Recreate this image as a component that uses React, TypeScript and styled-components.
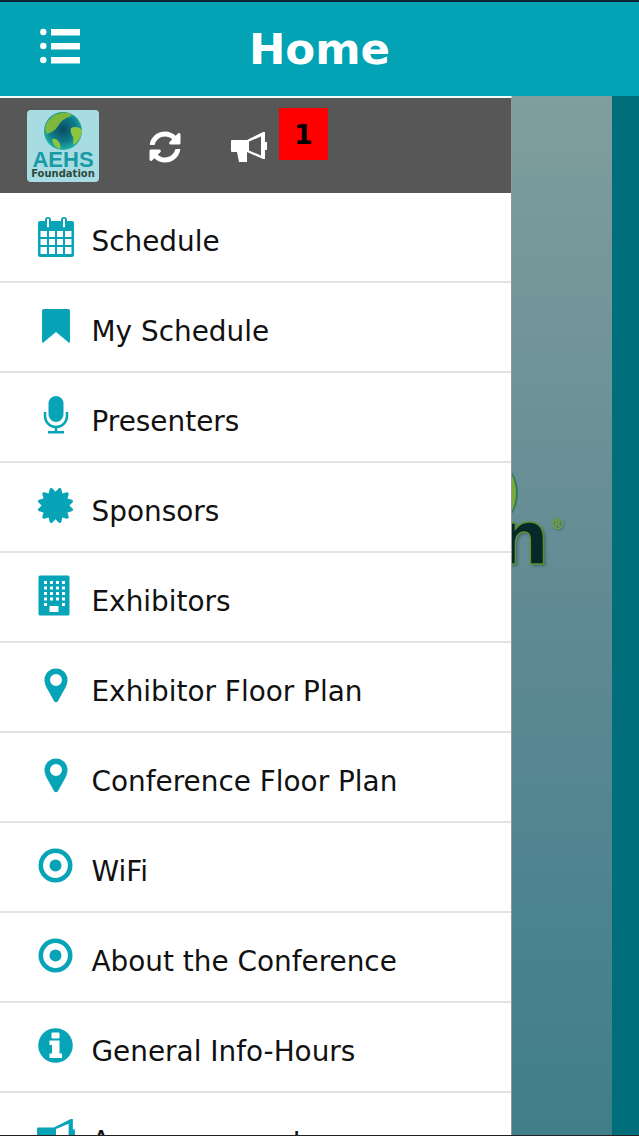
import React from "react";
import styled, { createGlobalStyle } from "styled-components";
import { FaCertificate, FaSyncAlt } from "react-icons/fa";

const GlobalStyle = createGlobalStyle`
  html, body {
    margin: 0;
    padding: 0;
    background: #006f7b;
  }
`;

const TEAL = "#07a3b6";

function MenuIcon() {
  return (
    <svg width="40" height="36" viewBox="0 0 40 36" fill="#fff">
      <circle cx="3.300" cy="4" r="3.200" />
      <circle cx="3.300" cy="18" r="3.200" />
      <circle cx="3.300" cy="32" r="3.200" />
      <rect x="11" y="1" width="29" height="6.500" />
      <rect x="11" y="15" width="29" height="6.500" />
      <rect x="11" y="29" width="29" height="6.500" />
    </svg>
  );
}

function CalendarIcon() {
  return (
    <CalendarSvg width="38" height="40" viewBox="0 0 38 40">
      <path
        fill={TEAL}
        fillRule="evenodd"
        d="M3 4h5V3a3 3 0 0 1 6 0v1h10V3a3 3 0 0 1 6 0v1h5a2 2 0 0 1 2 2v32a2 2 0 0 1-2 2H3a2 2 0 0 1-2-2V6a2 2 0 0 1 2-2zM10 2.500v7a1 1 0 0 0 2 0v-7a1 1 0 0 0-2 0zM26 2.500v7a1 1 0 0 0 2 0v-7a1 1 0 0 0-2 0zM3.500 14v6h6.500v-6zM12 14v6h6v-6zM20 14v6h6v-6zM28 14v6h6.500v-6zM3.500 22v6h6.500v-6zM12 22v6h6v-6zM20 22v6h6v-6zM28 22v6h6.500v-6zM3.500 30v7h6.500v-7zM12 30v7h6v-7zM20 30v7h6v-7zM28 30v7h6.500v-7z"
      />
    </CalendarSvg>
  );
}

function BookmarkIcon() {
  return (
    <svg width="30" height="35" viewBox="0 0 30 35">
      <path fill={TEAL} d="M3 1h24a2 2 0 0 1 2 2v30a1 1 0 0 1-2 1l-12-10L3 34a1 1 0 0 1-2-1V3a2 2 0 0 1 2-2z" />
    </svg>
  );
}

function MicIcon() {
  return (
    <svg width="26" height="38" viewBox="0 0 26 38">
      <rect x="5.500" y="0" width="15" height="26" rx="7.500" fill={TEAL} />
      <path d="M2 16v4a11 11 0 0 0 22 0v-4M13 31v5" fill="none" stroke={TEAL} strokeWidth="2.500" />
      <rect x="5" y="35" width="16" height="2.500" fill={TEAL} />
    </svg>
  );
}

function BuildingIcon() {
  const dots = [];
  for (let row = 0; row < 5; row++) {
    for (let col = 0; col < 4; col++) {
      if (row === 4 && (col === 1 || col === 2)) continue;
      dots.push(<rect key={`${row}-${col}`} x={6 + col * 6} y={6 + row * 5.500} width="3" height="3" fill="#fff" />);
    }
  }
  return (
    <svg width="32" height="41" viewBox="0 0 32 41">
      <rect x="0.500" y="0.500" width="31" height="40" rx="1.500" fill={TEAL} />
      {dots}
      <rect x="11.500" y="31" width="9" height="6" fill="#fff" />
    </svg>
  );
}

function PinIcon() {
  return (
    <svg width="24" height="35" viewBox="0 0 24 35">
      <path
        fill={TEAL}
        fillRule="evenodd"
        d="M12 0.500a11.500 11.500 0 0 1 11.500 11.500c0 3-1 5-2 7.500L14 33a2.200 2.200 0 0 1-4 0L2.500 19.500c-1-2.500-2-4.500-2-7.500A11.500 11.500 0 0 1 12 0.500zM12 6a6 6 0 1 0 0 12a6 6 0 0 0 0-12z"
      />
    </svg>
  );
}

function TargetIcon() {
  return (
    <svg width="35" height="35" viewBox="0 0 35 35">
      <circle cx="17.500" cy="17.500" r="14.700" fill="none" stroke={TEAL} strokeWidth="4.600" />
      <circle cx="17.500" cy="17.500" r="6" fill={TEAL} />
    </svg>
  );
}

function InfoIcon() {
  return (
    <svg width="35" height="35" viewBox="0 0 35 35">
      <circle cx="17.500" cy="17.500" r="17.300" fill={TEAL} />
      <rect x="13.500" y="4.500" width="8" height="6" rx="1" fill="#fff" />
      <path fill="#fff" d="M11.500 12.500h10v13h2.500v4.500h-12.500v-4.500h2.500v-8.500h-2.500z" />
    </svg>
  );
}

function HornIcon({ size, color }: { size: number; color: string }) {
  return (
    <svg width={size} height={(size * 33) / 38} viewBox="0 0 38 33">
      <path
        fill={color}
        fillRule="evenodd"
        d="M2 9H17L33 1h2V11h2v8h-2V28h-2L17 21V31H9L7 21H2a1 1 0 0 1-1-1V10a1 1 0 0 1 1-1zM19 10.500V19.500L31 24.500V5.500z"
      />
    </svg>
  );
}

function GlobeIcon() {
  return (
    <svg width="38" height="38" viewBox="0 0 38 38">
      <defs>
        <radialGradient id="globeSea" cx="50%" cy="45%" r="55%">
          <stop offset="0%" stopColor="#0b4a63" />
          <stop offset="65%" stopColor="#0f7f8a" />
          <stop offset="100%" stopColor="#22b3a8" />
        </radialGradient>
      </defs>
      <circle cx="19" cy="19" r="19" fill="url(#globeSea)" />
      <path fill="#7cb83c" d="M5 8C10 1 20-1 27 2c2 3-4 3-6 5-3 1-5 4-7 7-2 4-6 6-11 8C0 17 1 12 5 8z" />
      <path fill="#8cc63f" d="M27 16c4-2 8-1 11 2 0 6-3 11-8 15-2-2 0-5-1-8-2-3-3-6-2-9z" />
      <path fill="#8cc63f" d="M8 27c3-1 5 0 7 3 1 2 2 4 1 7-4-1-7-4-8-10z" />
    </svg>
  );
}

const items = [
  { label: "Schedule", icon: <CalendarIcon /> },
  { label: "My Schedule", icon: <BookmarkIcon />, inset: 41 },
  { label: "Presenters", icon: <MicIcon />, inset: 43 },
  { label: "Sponsors", icon: <FaCertificate size={35} />, inset: 38 },
  { label: "Exhibitors", icon: <BuildingIcon />, inset: 38 },
  { label: "Exhibitor Floor Plan", icon: <PinIcon />, inset: 44 },
  { label: "Conference Floor Plan", icon: <PinIcon />, inset: 44 },
  { label: "WiFi", icon: <TargetIcon />, inset: 38 },
  { label: "About the Conference", icon: <TargetIcon />, inset: 38 },
  { label: "General Info-Hours", icon: <InfoIcon />, inset: 38 },
  { label: "Announcements", icon: <HornIcon size={40} color={TEAL} />, inset: 36 },
];

export default function App() {
  return (
    <>
      <GlobalStyle />
      <Screen>
        <Header>
          <MenuButton>
            <MenuIcon />
          </MenuButton>
          <Title>Home</Title>
        </Header>
        <Body>
          <Drawer>
            <DrawerBar>
              <LogoTile>
                <GlobeIcon />
                <LogoName>AEHS</LogoName>
                <LogoSub>Foundation</LogoSub>
              </LogoTile>
              <RefreshSlot>
                <FaSyncAlt size={32} />
              </RefreshSlot>
              <HornSlot>
                <HornIcon size={38} color="#fff" />
              </HornSlot>
              <Badge>1</Badge>
            </DrawerBar>
            <MenuList>
              {items.map((item) => (
                <MenuRow key={item.label}>
                  <RowIcon $inset={item.inset ?? 37}>{item.icon}</RowIcon>
                  <RowLabel>{item.label}</RowLabel>
                </MenuRow>
              ))}
            </MenuList>
          </Drawer>
          <Backdrop>
            <GlobeEdge />
            <BrandLetter>n</BrandLetter>
            <BrandMark>®</BrandMark>
          </Backdrop>
          <EdgeStrip />
        </Body>
      </Screen>
    </>
  );
}

const Screen = styled.div`
  width: 639px;
  height: 1136px;
  display: flex;
  flex-direction: column;
  overflow: hidden;
  box-sizing: border-box;
  border-top: 2px solid #0c2436;
  border-bottom: 1px solid #222;
  font-family: "DejaVu Sans", sans-serif;
`;

const Header = styled.header`
  flex: 0 0 94px;
  position: relative;
  display: flex;
  align-items: center;
  justify-content: center;
  background: #03a3b6;
`;

const MenuButton = styled.div`
  position: absolute;
  left: 40px;
  top: 26px;
  display: flex;
`;

const Title = styled.h1`
  margin: 0;
  color: #fff;
  font-size: 43.5px;
  font-weight: 700;
`;

const Body = styled.div`
  flex: 1;
  min-height: 0;
  display: flex;
`;

const Drawer = styled.nav`
  flex: 0 0 512px;
  box-sizing: border-box;
  border-top: 2px solid #f2fafb;
  border-right: 1px solid #8b9a9c;
  background: #fff;
  overflow: hidden;
`;

const DrawerBar = styled.div`
  position: relative;
  height: 95px;
  display: flex;
  align-items: center;
  padding-left: 27px;
  background: #585757;
  color: #fff;
`;

const LogoTile = styled.div`
  width: 72px;
  height: 72px;
  margin-right: 50px;
  box-sizing: border-box;
  padding-top: 2px;
  display: flex;
  flex-direction: column;
  align-items: center;
  border-radius: 4px;
  background: #a7dde2;
  overflow: hidden;
`;

const LogoName = styled.span`
  margin-top: 1px;
  height: 17px;
  color: #1a9aa6;
  font-family: "Liberation Sans", sans-serif;
  font-size: 22px;
  font-weight: 700;
  line-height: 18px;
`;

const LogoSub = styled.span`
  margin-top: 1px;
  color: #2c4a3c;
  font-size: 10px;
  font-weight: 700;
  line-height: 10px;
`;

const RefreshSlot = styled.div`
  display: flex;
  margin-right: 49px;
  margin-top: 3px;
`;

const HornSlot = styled.div`
  display: flex;
  margin-top: 3px;
`;

const Badge = styled.div`
  position: absolute;
  left: 279px;
  top: 10px;
  width: 49px;
  height: 52px;
  display: flex;
  align-items: center;
  justify-content: center;
  background: #fe0000;
  color: #000;
  font-size: 27px;
  font-weight: 700;
`;

const MenuList = styled.ul`
  list-style: none;
  margin: 0;
  padding: 0;
`;

const MenuRow = styled.li`
  height: 88px;
  display: flex;
  align-items: center;
  border-bottom: 2px solid #e3e3e6;
`;

const RowIcon = styled.div<{ $inset: number }>`
  flex: 0 0 91px;
  box-sizing: border-box;
  padding-left: ${(p) => p.$inset}px;
  height: 50px;
  margin-top: -4px;
  display: flex;
  align-items: center;
  color: ${TEAL};
`;

const CalendarSvg = styled.svg`
  margin-top: 4px;
`;

const RowLabel = styled.span`
  margin-top: 8px;
  margin-left: 0.5px;
  color: #111;
  font-size: 27.9px;
`;

const Backdrop = styled.div`
  flex: 0 0 100px;
  position: relative;
  overflow: hidden;
  background: linear-gradient(180deg, #7f9e9e 0%, #608a93 50%, #4b8390 80%, #407e89 100%);
`;

const GlobeEdge = styled.div`
  position: absolute;
  left: -42px;
  top: 366px;
  width: 46px;
  height: 62px;
  border-radius: 50%;
  background: #7cab35;
  border-right: 2px solid #2f7568;
`;

const BrandLetter = styled.span`
  position: absolute;
  left: -16px;
  top: 411px;
  color: #06292a;
  font-size: 75px;
  font-weight: 700;
  line-height: 62px;
  -webkit-text-stroke: 1.5px #5d8f32;
  text-shadow: 2px 2px 3px rgba(20, 50, 50, 0.4);
`;

const BrandMark = styled.span`
  position: absolute;
  left: 38px;
  top: 421px;
  color: #6ea33a;
  font-size: 15px;
  font-weight: 700;
  line-height: 15px;
  text-shadow: 1px 1px 2px rgba(20, 50, 50, 0.4);
`;

const EdgeStrip = styled.div`
  flex: 1;
  background: #006f7b;
`;
